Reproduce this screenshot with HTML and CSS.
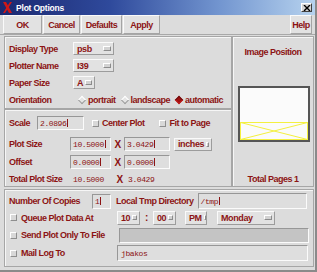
FILE: index.html
```html
<!DOCTYPE html>
<html lang="en">
<head>
  <meta charset="UTF-8">
  <title>Plot Options</title>
  <link rel="stylesheet" href="styles.css">
</head>
<body>
<div class="window">
  <div class="titlebar">
    <svg class="xlogo" width="9" height="11" viewBox="0 0 9 11">
      <polygon points="0,0 3,0 9,11 6,11" fill="#d01818"/>
      <polygon points="7,0 9,0 2,11 0,11" fill="#d01818"/>
    </svg>
    <span class="title">Plot Options</span>
    <span class="close">
      <svg width="8" height="6" viewBox="0 0 8 6">
        <path d="M1 0 L7 6 M7 0 L1 6" stroke="#000" stroke-width="1.4"/>
      </svg>
    </span>
  </div>

  <div class="toolbar">
    <button class="tb w-ok">OK</button>
    <button class="tb w-cancel">Cancel</button>
    <button class="tb w-defaults">Defaults</button>
    <button class="tb w-apply">Apply</button>
    <button class="tb w-help">Help</button>
  </div>

  <div class="upper">
    <div class="left">
      <div class="panel p1">
        <div class="row">
          <span class="lbl w64">Display Type</span>
          <span class="opt w41">psb</span>
        </div>
        <div class="row">
          <span class="lbl w64">Plotter Name</span>
          <span class="opt w41">I39</span>
        </div>
        <div class="row">
          <span class="lbl w64">Paper Size</span>
          <span class="opt w22">A</span>
        </div>
        <div class="row">
          <span class="lbl w64">Orientation</span>
          <span class="radio r-portrait"><i class="dia"></i>portrait</span>
          <span class="radio"><i class="dia"></i>landscape</span>
          <span class="radio"><i class="dia on"></i>automatic</span>
        </div>
      </div>

      <div class="panel p2">
        <div class="row r-scale">
          <span class="lbl w28">Scale</span>
          <span class="field w47">2.0896<i class="caret"></i></span>
          <span class="check c-center"><i class="cb"></i>Center Plot</span>
          <span class="check c-fit"><i class="cb"></i>Fit to Page</span>
        </div>
        <div class="row">
          <span class="lbl w61">Plot Size</span>
          <span class="field w41">10.5000<i class="caret"></i></span>
          <span class="times">X</span>
          <span class="field w46">3.0429<i class="caret"></i></span>
          <span class="opt w38 o-inches">inches</span>
        </div>
        <div class="row">
          <span class="lbl w61">Offset</span>
          <span class="field w41">0.0000<i class="caret"></i></span>
          <span class="times">X</span>
          <span class="field w46">0.0000<i class="caret"></i></span>
        </div>
        <div class="row r-total">
          <span class="lbl w64">Total Plot Size</span>
          <span class="value w38">10.5000</span>
          <span class="times t-total">X</span>
          <span class="value">3.0429</span>
        </div>
      </div>
    </div>

    <div class="panel right">
      <div class="ip-title">Image Position</div>
      <svg class="preview" width="72" height="56" viewBox="0 0 72 56">
        <rect x="1" y="1" width="70" height="54" fill="#fbfbfb" stroke="#555" stroke-width="2"/>
        <rect x="2.5" y="36.5" width="67" height="17" fill="none" stroke="#f4f040" stroke-width="1"/>
        <path d="M2.5 36.5 L69.5 53.5 M69.5 36.5 L2.5 53.5" stroke="#f4f040" stroke-width="1"/>
      </svg>
      <div class="pages">Total Pages 1</div>
    </div>
  </div>

  <div class="panel lower">
    <div class="row l-copies">
      <span class="lbl w83">Number Of Copies</span>
      <span class="field w19">1<i class="caret"></i></span>
      <span class="lbl tmp">Local Tmp Directory</span>
      <span class="field w109">/tmp<i class="caret"></i></span>
    </div>
    <div class="row l-queue">
      <span class="check w108"><i class="cb"></i>Queue Plot Data At</span>
      <span class="opt w23">10</span>
      <span class="colon">:</span>
      <span class="opt w23">00</span>
      <span class="opt w22 o-pm">PM</span>
      <span class="opt w58 o-day">Monday</span>
    </div>
    <div class="row l-send">
      <span class="check w109"><i class="cb"></i>Send Plot Only To File</span>
      <span class="field w190 off"></span>
    </div>
    <div class="row l-mail">
      <span class="check w108"><i class="cb"></i>Mail Log To</span>
      <span class="field w191 tall">jbakos</span>
    </div>
  </div>
</div>
</body>
</html>
```

FILE: styles.css
```css
* {
  box-sizing: border-box;
}

body {
  margin: 0;
  font-family: "Liberation Sans", Arial, sans-serif;
  background: #dcdcdc;
}

.window {
  width: 317px;
  height: 272px;
  background: #dcdcdc;
  border-right: 2px solid #8a8a8a;
  border-bottom: 2px solid #8a8a8a;
  overflow: hidden;
}

/* title bar */
.titlebar {
  height: 15px;
  display: flex;
  align-items: center;
  background: linear-gradient(to right, #1b2870 0%, #2f4a9c 35%, #7396d0 70%, #b6d2ee 100%);
}

.xlogo {
  margin: 0 4px 0 3px;
}

.title {
  color: #ffffff;
  font-weight: bold;
  font-size: 8.5px;
  letter-spacing: -0.2px;
}

.close {
  margin-left: auto;
  margin-right: 3px;
  width: 11px;
  height: 9px;
  display: flex;
  align-items: center;
  justify-content: center;
  background: #d4d4d4;
  border: 1px solid;
  border-color: #ffffff #404040 #404040 #ffffff;
}

/* toolbar */
.toolbar {
  height: 20px;
  display: flex;
  gap: 1px;
  padding: 0 3px;
  border-bottom: 1px solid #a8a8a8;
}

.tb {
  height: 19px;
  padding: 0;
  background: #e2e2e2;
  border: 1px solid;
  border-color: #fafafa #a4a4a4 #a4a4a4 #fafafa;
  color: #8c1414;
  font-family: "Liberation Sans", Arial, sans-serif;
  font-weight: bold;
  font-size: 9px;
  letter-spacing: -0.5px;
}

.w-ok { width: 39px; }
.w-cancel { width: 37px; }
.w-defaults { width: 41px; }
.w-apply { width: 37px; }
.w-help { width: 22px; margin-left: auto; }

/* panels */
.panel {
  border: 1px solid #a6a6a6;
  box-shadow: inset 1px 1px 0 #f6f6f6;
}

.upper {
  display: flex;
  margin: 1px 0 0 4px;
  width: 310px;
  height: 151px;
}

.left {
  width: 228px;
  display: flex;
  flex-direction: column;
}

.p1 {
  height: 73px;
  padding: 3px 0 0 4px;
}

.p2 {
  height: 78px;
  padding: 4px 0 0 4px;
}

.right {
  width: 82px;
  display: flex;
  flex-direction: column;
  align-items: center;
  padding-bottom: 1px;
}

.row {
  display: flex;
  align-items: center;
  height: 17px;
}

.lbl,
.check,
.radio,
.times,
.colon,
.ip-title,
.pages {
  color: #8c1414;
  font-weight: bold;
  font-size: 9px;
  letter-spacing: -0.5px;
  white-space: nowrap;
}

.w19 { width: 19px; }
.w22 { width: 22px; }
.w23 { width: 23px; }
.w28 { width: 28px; }
.w38 { width: 38px; }
.w41 { width: 41px; }
.w46 { width: 46px; }
.w47 { width: 47px; }
.w58 { width: 58px; }
.w61 { width: 61px; }
.w64 { width: 64px; }
.w83 { width: 83px; }
.w108 { width: 108px; }
.w109 { width: 109px; }
.w190 { width: 190px; }
.w191 { width: 191px; }

/* option menus */
.opt {
  height: 13px;
  display: inline-flex;
  align-items: center;
  justify-content: space-between;
  padding: 0 2px 0 3px;
  background: #e2e2e2;
  border: 1px solid;
  border-color: #fafafa #9c9c9c #9c9c9c #fafafa;
  color: #8c1414;
  font-weight: bold;
  font-size: 9px;
  letter-spacing: -0.4px;
}

.opt::after {
  content: "";
  width: 6px;
  height: 3px;
  margin-left: 2px;
  background: #d2d2d2;
  border: 1px solid;
  border-color: #ffffff #8c8c8c #8c8c8c #ffffff;
}

.o-inches { margin-left: 4px; }

/* radios */
.radio {
  display: inline-flex;
  align-items: center;
}

.r-portrait { margin-left: 4px; }

.dia {
  width: 6px;
  height: 6px;
  margin: 0 3px 0 2px;
  transform: rotate(45deg);
  background: #e4e4e4;
  border: 1px solid;
  border-color: #ffffff #9a9a9a #9a9a9a #ffffff;
}

.radio + .radio .dia { margin-left: 6px; }

.dia.on {
  background: #a01010;
  border-color: #701010 #c02020 #c02020 #701010;
}

/* checkboxes */
.check {
  display: inline-flex;
  align-items: center;
}

.cb {
  width: 7px;
  height: 7px;
  margin: 0 4px 0 1px;
  background: #d8d8d8;
  border: 1px solid;
  border-color: #ffffff #8e8e8e #8e8e8e #ffffff;
}

.c-center { margin-left: 7px; }
.c-center .cb { margin-right: 3px; }
.c-fit { margin-left: 13px; }

/* text fields */
.field {
  height: 14px;
  display: inline-flex;
  align-items: center;
  padding-left: 2px;
  background: #dedede;
  border: 1px solid;
  border-color: #979797 #fbfbfb #fbfbfb #979797;
  color: #8c1414;
  font-family: "Liberation Mono", "Courier New", monospace;
  font-size: 8px;
  letter-spacing: -0.4px;
}

.field.off {
  height: 15px;
  margin-left: 1px;
  background: #c4c4c4;
}

.field.tall {
  height: 16px;
  padding-left: 3px;
}

.caret {
  width: 1px;
  height: 8px;
  margin-left: 1px;
  background: #8c1414;
}

.value {
  color: #8c1414;
  font-family: "Liberation Mono", "Courier New", monospace;
  font-size: 8px;
  letter-spacing: -0.4px;
}

.times {
  width: 13px;
  text-align: center;
  font-size: 10px;
}

.t-total { width: 17px; }

.r-scale { height: 18px; margin-bottom: 3px; }
.p2 .row { height: 18px; }
.p2 .r-total { height: 16px; }

/* image position */
.ip-title {
  margin-top: 9px;
  line-height: 12px;
}

.preview {
  margin-top: 28px;
  margin-left: 2px;
}

.pages {
  margin-top: auto;
  line-height: 12px;
}

/* lower panel */
.lower {
  margin: 2px 0 0 4px;
  width: 310px;
  height: 78px;
  padding: 3px 0 0 4px;
}

.l-copies { height: 16px; }
.l-queue { height: 17px; }
.l-send { height: 18px; }
.l-mail { height: 18px; }

.l-copies .field { height: 15px; }
.l-copies .field.w109 { height: 16px; margin-left: 4px; }
.tmp { margin-left: 5px; }

.colon {
  width: 13px;
  text-align: center;
  font-size: 10px;
}

.o-pm { margin-left: 9px; }
.o-day { margin-left: 10px; }
.l-queue .opt { height: 14px; }
```
